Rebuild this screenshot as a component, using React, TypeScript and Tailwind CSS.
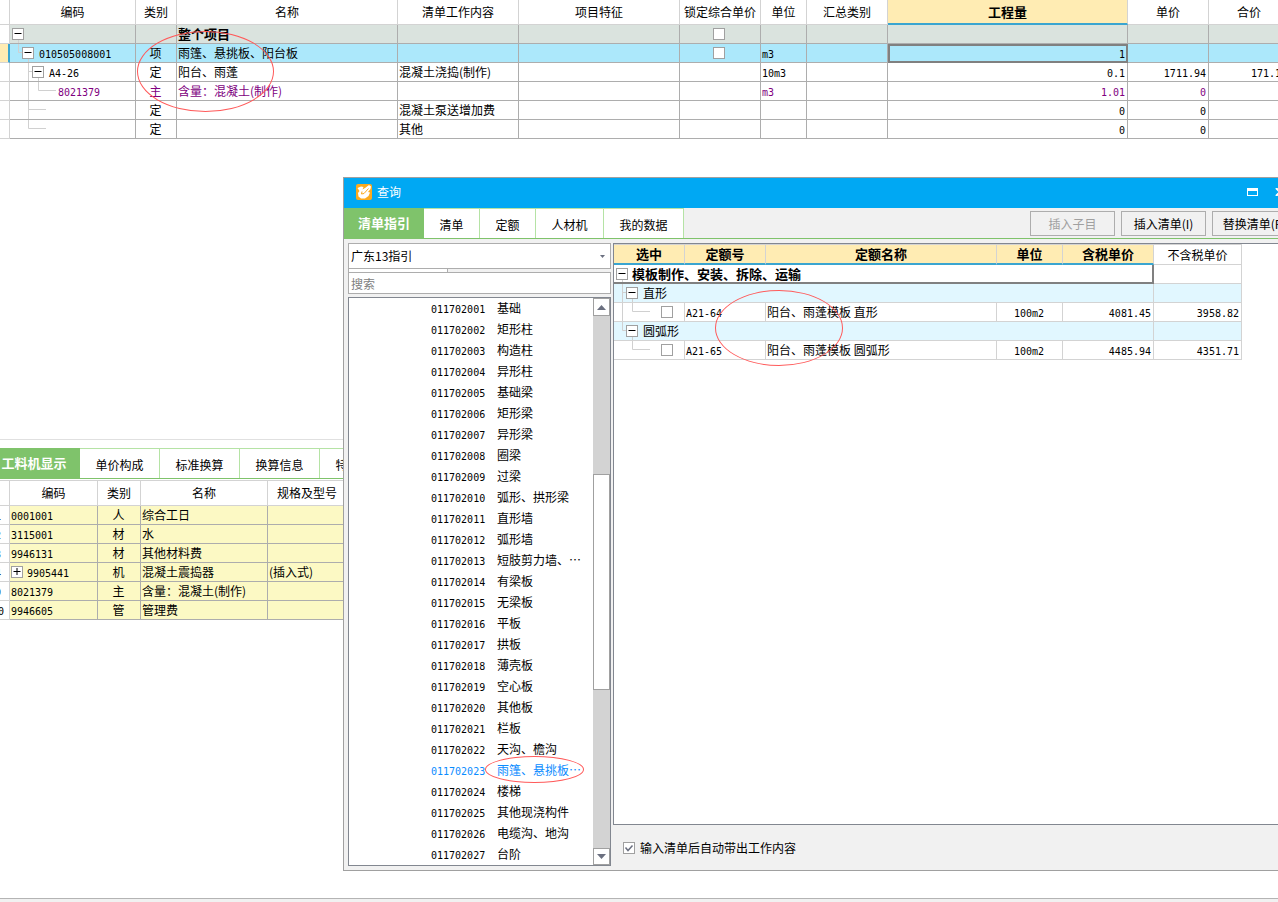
import { useState, type ReactNode } from 'react';
import clsx from 'clsx';

const rows = [
  { code: '', kind: '', name: '整个项目', work: '', lock: true, unit: '', qty: '', price: '', total: '', lines: 'M8.5 15V19', toggle: 'pl-[2px]' },
  { code: '010505008001', kind: '项', name: '雨篷、悬挑板、阳台板', work: '', lock: true, unit: 'm3', qty: '1', price: '', total: '', lines: 'M8.5 0V8.5H12M18.5 15V19', toggle: 'pl-[12px]' },
  { code: 'A4-26', kind: '定', name: '阳台、雨蓬', work: '混凝土浇捣(制作)', lock: false, unit: '10m3', qty: '0.1', price: '1711.94', total: '171.19', lines: 'M18.5 0V19M18.5 8.5H22M28.5 15V19', toggle: 'pl-[22px]' },
  { code: '8021379', kind: '主', name: '含量：混凝土(制作)', work: '', lock: false, unit: 'm3', qty: '1.01', price: '0', total: '', lines: 'M18.5 0V19M28.5 0V8.5H46', toggle: '' },
  { code: '', kind: '定', name: '', work: '混凝土泵送增加费', lock: false, unit: '', qty: '0', price: '0', total: '', lines: 'M18.5 0V19M18.5 8.5H36', toggle: '' },
  { code: '', kind: '定', name: '', work: '其他', lock: false, unit: '', qty: '0', price: '0', total: '', lines: 'M18.5 0V8.5H36', toggle: '' },
];

const rowColors = ['bg-[#dae3de]', 'bg-[#ace8fb]', '', 'text-[#800080]', '', ''];

const materials = [
  { no: '1', code: '0001001', kind: '人', name: '综合工日', spec: '' },
  { no: '2', code: '3115001', kind: '材', name: '水', spec: '' },
  { no: '3', code: '9946131', kind: '材', name: '其他材料费', spec: '' },
  { no: '4', code: '9905441', kind: '机', name: '混凝土震捣器', spec: '(插入式)' },
  { no: '9', code: '8021379', kind: '主', name: '含量：混凝土(制作)', spec: '' },
  { no: '10', code: '9946605', kind: '管', name: '管理费', spec: '' },
];

const guideItems = [
  '基础', '矩形柱', '构造柱', '异形柱', '基础梁', '矩形梁', '异形梁', '圈梁', '过梁',
  '弧形、拱形梁', '直形墙', '弧形墙', '短肢剪力墙、…', '有梁板', '无梁板', '平板', '拱板',
  '薄壳板', '空心板', '其他板', '栏板', '天沟、檐沟', '雨篷、悬挑板…', '楼梯',
  '其他现浇构件', '电缆沟、地沟', '台阶',
];

function Num({ children }: { children: ReactNode }) {
  return <span className="font-['DejaVu_Sans_Mono',monospace] text-[10px] leading-none">{children}</span>;
}

function Toggle({ open = true, label }: { open?: boolean; label: string }) {
  return (
    <button type="button" aria-label={label} aria-expanded={open} className="relative size-3 shrink-0 border border-[#a0a0a0] bg-white text-black">
      <svg viewBox="0 0 10 10" className="block size-[10px]" stroke="currentColor">
        <path d={open ? 'M1.5 4.5H8.5' : 'M1.5 4.5H8.5M5 1V8'} />
      </svg>
    </button>
  );
}

function Check({ label }: { label: string }) {
  return <input type="checkbox" aria-label={label} className="block size-3 shrink-0 appearance-none border border-[#a0a0a0] bg-white checked:bg-[#6b7080]" />;
}

function TreeLines({ d }: { d: string }) {
  return (
    <svg className="absolute top-0 left-0 h-[19px] w-[60px]" fill="none" stroke="#d0d0d0">
      <path d={d} />
    </svg>
  );
}

function Th({ children, active, className }: { children?: ReactNode; active?: boolean; className?: string }) {
  return (
    <th
      className={clsx(
        'overflow-hidden border-r border-[#d3d3d3] p-0 text-center whitespace-nowrap',
        active ? 'border-b-2 border-b-[#3aa5d0] bg-[#ffecb3] text-[13px] font-bold' : 'border-b font-normal',
        className,
      )}
    >
      {children}
    </th>
  );
}

function Td({ children, className, span }: { children?: ReactNode; className?: string; span?: number }) {
  return (
    <td colSpan={span} className={clsx('relative h-[19px] overflow-hidden border-r border-b p-0 pr-[2px] pl-px leading-[18px] whitespace-nowrap', className)}>
      {children}
    </td>
  );
}

function BillTable() {
  return (
    <table className="w-[calc(100%+12px)] table-fixed border-separate border-spacing-0">
      <colgroup>
        <col className="w-[10px]" />
        <col className="w-[126px]" />
        <col className="w-[41px]" />
        <col className="w-[221px]" />
        <col className="w-[121px]" />
        <col className="w-[161px]" />
        <col className="w-[81px]" />
        <col className="w-[46px]" />
        <col className="w-[81px]" />
        <col />
        <col className="w-[81px]" />
        <col className="w-[81px]" />
      </colgroup>
      <thead>
        <tr className="h-[25px]">
          <Th />
          <Th>编码</Th>
          <Th>类别</Th>
          <Th>名称</Th>
          <Th>清单工作内容</Th>
          <Th>项目特征</Th>
          <Th>锁定综合单价</Th>
          <Th>单位</Th>
          <Th>汇总类别</Th>
          <Th active>工程量</Th>
          <Th>单价</Th>
          <Th>合价</Th>
        </tr>
      </thead>
      <tbody>
        {rows.map((row, i) => (
          <tr key={i} className={rowColors[i]}>
            <Td className={clsx(i === 1 ? 'border-r-2 border-r-[#3aa5d0] border-b-[#d3d3d3] bg-[#ffecb3]' : 'border-[#d3d3d3] bg-white')} />
            <Td className="border-[#adadad]">
              <TreeLines d={row.lines} />
              <div className={clsx('relative -ml-px flex items-center gap-[5px]', row.toggle || 'pl-[48px]')}>
                {row.toggle && <Toggle label={'展开 ' + row.name} />}
                <span><Num>{row.code}</Num></span>
              </div>
            </Td>
            <Td className="border-[#adadad] text-center">{row.kind}</Td>
            <Td className={clsx('border-[#adadad]', i === 0 && 'text-[13px] font-bold')}>{row.name}</Td>
            <Td className="border-[#adadad]">{row.work}</Td>
            <Td className="border-[#adadad]" />
            <Td className="border-[#adadad]">
              {row.lock && (
                <div className="flex justify-center pr-px">
                  <Check label={'锁定综合单价 ' + row.name} />
                </div>
              )}
            </Td>
            <Td className="border-[#adadad]"><Num>{row.unit}</Num></Td>
            <Td className="border-[#adadad]" />
            <Td className={clsx('text-right', i === 1 ? 'border-[#808080] outline-2 -outline-offset-2 outline-[#808080]' : 'border-[#adadad]')}>
              <Num>{row.qty}</Num>
            </Td>
            <Td className="border-[#adadad] text-right"><Num>{row.price}</Num></Td>
            <Td className="border-[#adadad] text-right"><Num>{row.total}</Num></Td>
          </tr>
        ))}
      </tbody>
    </table>
  );
}

function MaterialPanel() {
  return (
    <section className="-ml-3 flex-1 pt-2">
      <div role="tablist" className="flex h-[31px] border-b border-[#7fc36b]">
        <button type="button" role="tab" aria-selected="true" className="w-[92px] bg-[#7fc36b] text-[13px] font-bold text-white">工料机显示</button>
        {['单价构成', '标准换算', '换算信息', '特征内容'].map((tab) => (
          <button key={tab} type="button" role="tab" aria-selected="false" className="w-20 border-t border-r border-[#b5e3a5] pt-[2px] whitespace-nowrap">
            {tab}
          </button>
        ))}
      </div>
      <table className="mt-px w-[359px] table-fixed border-separate border-spacing-0 border-t border-[#d3d3d3]">
        <colgroup>
          <col className="w-[22px]" />
          <col className="w-[88px]" />
          <col className="w-[43px]" />
          <col className="w-[127px]" />
          <col />
        </colgroup>
        <thead>
          <tr className="h-[25px]">
            <Th />
            <Th>编码</Th>
            <Th>类别</Th>
            <Th>名称</Th>
            <Th>规格及型号</Th>
          </tr>
        </thead>
        <tbody>
          {materials.map((m) => (
            <tr key={m.no} className="bg-[#fcf9c4]">
              <Td className="border-[#d3d3d3] bg-white text-center"><Num>{m.no}</Num></Td>
              <Td className="border-[#adadad]">
                <div className="flex items-center gap-1">
                  {m.spec && <Toggle open={false} label={'展开 ' + m.name} />}
                  <span><Num>{m.code}</Num></span>
                </div>
              </Td>
              <Td className="border-[#adadad] text-center">{m.kind}</Td>
              <Td className="border-[#adadad]">{m.name}</Td>
              <Td className="border-[#adadad]">{m.spec}</Td>
            </tr>
          ))}
        </tbody>
      </table>
    </section>
  );
}

function GuideList() {
  const [selected, setSelected] = useState(22);

  return (
    <div className="flex border border-[#828790] bg-white">
      <ul className="min-w-0 flex-1">
        {guideItems.map((name, i) => (
          <li key={name}>
            <button
              type="button"
              onClick={() => setSelected(i)}
              className={clsx('flex h-[21px] w-full items-center pb-[2px] pl-[82px] whitespace-nowrap', selected === i && 'text-[#0a8cff]')}
            >
              <span className="w-[66px] text-left"><Num>{'011702' + String(i + 1).padStart(3, '0')}</Num></span>
              {name}
            </button>
          </li>
        ))}
      </ul>
      <div className="flex w-[17px] flex-col bg-[#d3d3d3]">
        <button type="button" aria-label="向上滚动" className="flex h-[18px] items-center justify-center border border-[#a0a0a0] bg-white">
          <svg viewBox="0 0 9 5" className="h-[5px] w-[9px]"><path d="M0 5L4.5 0L9 5Z" fill="#6b7080" /></svg>
        </button>
        <div className="h-[158px]" />
        <div className="h-[216px] border border-[#a0a0a0] bg-white" />
        <div className="flex-1" />
        <button type="button" aria-label="向下滚动" className="flex h-[17px] items-center justify-center border border-[#a0a0a0] bg-white">
          <svg viewBox="0 0 9 5" className="h-[5px] w-[9px]"><path d="M0 0L4.5 5L9 0Z" fill="#6b7080" /></svg>
        </button>
      </div>
    </div>
  );
}

function QuotaTable() {
  const groups = [
    { name: '直形', code: 'A21-64', item: '阳台、雨蓬模板 直形', taxed: '4081.45', net: '3958.82', lines: 'M8.5 0V19M8.5 8.5H12M18.5 15V19', child: 'M8.5 0V19M18.5 0V8.5H36' },
    { name: '圆弧形', code: 'A21-65', item: '阳台、雨蓬模板 圆弧形', taxed: '4485.94', net: '4351.71', lines: 'M8.5 0V8.5H12M18.5 15V19', child: 'M18.5 0V8.5H36' },
  ];

  return (
    <table className="w-[628px] table-fixed border-separate border-spacing-0">
      <colgroup>
        <col className="w-[71px]" />
        <col className="w-[81px]" />
        <col className="w-[231px]" />
        <col className="w-[66px]" />
        <col className="w-[91px]" />
        <col className="w-[88px]" />
      </colgroup>
      <thead>
        <tr className="h-[21px]">
          <Th active className="border-t">选中</Th>
          <Th active className="border-t">定额号</Th>
          <Th active className="border-t">定额名称</Th>
          <Th active className="border-t">单位</Th>
          <Th active className="border-t">含税单价</Th>
          <Th className="border-t">不含税单价</Th>
        </tr>
      </thead>
      <tbody>
        <tr>
          <Td span={5} className="border-r-2 border-b-2 border-[#808080]">
            <TreeLines d="M8.5 15V19" />
            <div className="relative flex items-center gap-1 pl-px text-[13px] leading-4 font-bold">
              <Toggle label="展开 模板制作" />
              模板制作、安装、拆除、运输
            </div>
          </Td>
          <Td className="border-[#d3d3d3]" />
        </tr>
        {groups.map((g) => [
          <tr key={g.name} className="bg-[#e1f7ff]">
            <Td span={5} className="border-[#d3d3d3]">
              <TreeLines d={g.lines} />
              <div className="relative flex items-center gap-[5px] pl-[11px]">
                <Toggle label={'展开 ' + g.name} />
                {g.name}
              </div>
            </Td>
            <Td className="border-[#d3d3d3]" />
          </tr>,
          <tr key={g.code}>
            <Td className="border-[#d3d3d3]">
              <TreeLines d={g.child} />
              <div className="flex items-center pl-[46px]">
                <Check label={'选中 ' + g.code} />
              </div>
            </Td>
            <Td className="border-[#d3d3d3]"><Num>{g.code}</Num></Td>
            <Td className="border-[#d3d3d3]">{g.item}</Td>
            <Td className="border-[#d3d3d3] text-center"><Num>100m2</Num></Td>
            <Td className="border-[#d3d3d3] text-right"><Num>{g.taxed}</Num></Td>
            <Td className="border-[#d3d3d3] text-right"><Num>{g.net}</Num></Td>
          </tr>,
        ])}
      </tbody>
    </table>
  );
}

function QueryDialog() {
  const tabs = [
    { name: '清单', width: 'w-14' },
    { name: '定额', width: 'w-14' },
    { name: '人材机', width: 'w-[68px]' },
    { name: '我的数据', width: 'w-20' },
  ];

  return (
    <div role="dialog" aria-label="查询" className="absolute top-[177px] -right-[25px] left-[343px] border border-[#a0a0a0] bg-[#f1f1f1]">
      <header className="flex h-[30px] items-center bg-[#00a8f3] pr-[17px] pb-[2px] pl-3 text-white">
        <svg viewBox="0 0 16 16" className="mr-[5px] size-4">
          <rect width="16" height="16" rx="2" fill="#fbaa1e" />
          <path d="M1.5 4L5 2.5L7.5 3L6.5 5.5L9 4L13 1L15 2.5L14.5 5L12 8L14 8.5L12.5 12L9 14.5L5 14.5L2.5 12.5L2 9L3.5 7Z" fill="#fff" />
          <path d="M6 7.5L5.5 10L8 9.5L12.5 4.5" fill="none" stroke="#fbaa1e" />
        </svg>
        <span className="flex-1">查询</span>
        <button type="button" aria-label="最大化" className="mr-[17px]">
          <svg viewBox="0 0 11 8" className="h-2 w-[11px]"><path d="M0 0H11V8H0ZM1 3V7H10V3Z" fill="#fff" fillRule="evenodd" /></svg>
        </button>
        <button type="button" aria-label="关闭">
          <svg viewBox="0 0 10 8" className="h-2 w-[10px]" stroke="#fff" strokeWidth="2"><path d="M1 0L9 8M9 0L1 8" /></svg>
        </button>
      </header>

      <div className="flex h-[31px] border-b border-[#7fc36b]">
        <div role="tablist" className="flex flex-1">
          <button type="button" role="tab" aria-selected="true" className="w-20 bg-[#7fc36b] text-[13px] font-bold text-white">清单指引</button>
          {tabs.map((tab) => (
            <button key={tab.name} type="button" role="tab" aria-selected="false" className={clsx('border-t border-r border-[#b5e3a5] bg-white pt-[2px]', tab.width)}>
              {tab.name}
            </button>
          ))}
        </div>
        <div className="flex gap-[6px] pt-[3px] pr-[5px]">
          <button type="button" disabled className="h-[25px] w-[85px] border border-[#adadad] text-[#a0a0a0]">插入子目</button>
          <button type="button" className="h-[25px] w-[85px] border border-[#adadad]">插入清单(I)</button>
          <button type="button" className="h-[25px] w-[85px] border border-[#adadad]">替换清单(R)</button>
        </div>
      </div>

      <div className="flex gap-[2px] pt-1 pb-1 pl-1">
        <div className="flex w-[263px] shrink-0 flex-col">
          <div className="relative">
            <select aria-label="指引" className="block h-[26px] w-full appearance-none border border-[#adadad] bg-white pl-[2px]">
              <option>广东13指引</option>
            </select>
            <svg viewBox="0 0 5 3" className="pointer-events-none absolute top-3 right-[6px] h-[3px] w-[5px]"><path d="M0 0H5L2.5 3Z" fill="#6b7080" /></svg>
          </div>
          <div className="h-[3px] w-[100px] border-r border-l border-[#adadad] bg-white" />
          <input type="search" aria-label="搜索" placeholder="搜索" className="mb-[3px] h-[22px] w-full border border-[#adadad] bg-white px-[2px] placeholder:text-[#808080]" />
          <GuideList />
        </div>
        <div className="flex min-w-0 flex-1 flex-col">
          <div className="flex-1 border border-[#828790] bg-white">
            <QuotaTable />
          </div>
          <label className="flex h-[41px] items-center gap-[5px] pt-1 pl-[10px]">
            <span className="relative block size-3">
              <input type="checkbox" defaultChecked className="peer block size-3 appearance-none border border-[#a0a0a0] bg-white" />
              <svg viewBox="0 0 12 12" className="pointer-events-none absolute inset-0 hidden size-3 peer-checked:block" fill="none" stroke="#6b7080" strokeWidth="1.5">
                <path d="M2.5 5.5L5 8.5L9.5 3.5" />
              </svg>
            </span>
            输入清单后自动带出工作内容
          </label>
        </div>
      </div>
    </div>
  );
}

export default function App() {
  return (
    <div lang="zh-CN" className="relative flex min-h-screen flex-col overflow-hidden bg-white font-['Noto_Sans_CJK_SC','Liberation_Sans',sans-serif] text-xs text-black">
      <section className="h-[440px] border-b border-[#e0e0e0]">
        <BillTable />
      </section>
      <MaterialPanel />
      <footer className="h-1 border-t border-[#b4b4b4] bg-[#f1f1f1]" />

      <QueryDialog />

      {/* review marks */}
      <div className="pointer-events-none absolute top-[31px] left-[137px] h-[81px] w-[137px] rounded-[50%] border border-[#ff5a5a]" />
      <div className="pointer-events-none absolute top-[290px] left-[715px] h-[76px] w-[128px] rounded-[50%] border border-[#ff5a5a]" />
      <div className="pointer-events-none absolute top-[756px] left-[485px] h-[27px] w-[99px] rounded-[50%] border border-[#ff5a5a]" />
    </div>
  );
}
